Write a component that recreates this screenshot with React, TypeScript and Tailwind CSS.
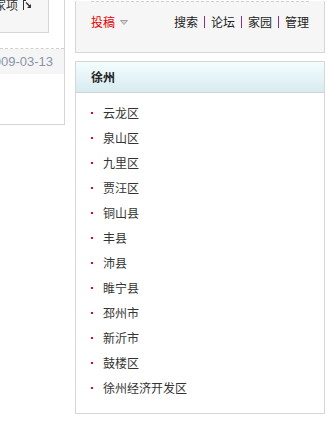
import React from "react";

const districts = [
  "云龙区",
  "泉山区",
  "九里区",
  "贾汪区",
  "铜山县",
  "丰县",
  "沛县",
  "睢宁县",
  "邳州市",
  "新沂市",
  "鼓楼区",
  "徐州经济开发区",
];

const links = ["搜索", "论坛", "家园", "管理"];

const cjk = "font-['SimSun','Noto_Sans_CJK_SC',sans-serif]";

function CornerIcon() {
  return (
    <svg width="9" height="10" viewBox="0 0 9 10" className="shrink-0">
      <path d="M0.5 0 V10 M0.5 0.5 H3" stroke="#333" strokeWidth="1" fill="none" />
      <path d="M3 2.5 L7 6.5" stroke="#333" strokeWidth="1.4" />
      <path d="M8 4 V8 H4 Z" fill="#333" />
    </svg>
  );
}

export default function App() {
  return (
    <div className={`flex w-[333px] h-[423px] overflow-hidden bg-white text-[12px] text-[#333] ${cjk}`}>
      {/* left column, mostly cut off */}
      <div className="w-[65px] shrink-0 h-[125px] border-r border-b border-[#d6d6d6] overflow-hidden">
        <div className="w-[49px] h-[33px] bg-[#f6f6f6] border-r border-b border-[#d6d6d6] overflow-hidden">
          <div className="flex justify-end items-center gap-[5px] pr-[16px] mt-[-5px] h-[20px] leading-[20px] whitespace-nowrap">
            <span>显示选家项</span>
            <CornerIcon />
          </div>
        </div>
        <div className="mt-[15px] border-t border-dashed border-[#d0d0d0]" />
        <div className="h-[25px] bg-[#f5f5f5] flex justify-end items-center pr-[11px] whitespace-nowrap font-['Liberation_Sans',Arial,sans-serif] text-[13px] text-[#8996a8]">
          2009-03-13
        </div>
      </div>

      {/* right column */}
      <div className="ml-[10px] w-[250px] shrink-0">
        <div className="h-[52px] bg-[#f6f6f6] border-x border-b border-[#d6d6d6]">
          <div className="mx-[15px] mt-px border-t border-dashed border-[#cfcfcf]" />
          <div className="flex justify-between items-center px-[15px] mt-[10px] h-[20px]">
            <div className="flex items-center gap-[5px]">
              <span className="text-[#e60000]">投稿</span>
              <svg width="8" height="5" viewBox="0 0 8 5">
                <polygon points="0.5,0.5 7.5,0.5 4,4.5" fill="#d8d8d8" stroke="#a0a0a0" strokeWidth="1" />
              </svg>
            </div>
            <div className="flex items-center">
              {links.map((l, i) => (
                <React.Fragment key={l}>
                  {i > 0 && <span className="inline-block w-px h-[12px] bg-[#86348a] mx-[6px]" />}
                  <span className="text-[#222]">{l}</span>
                </React.Fragment>
              ))}
            </div>
          </div>
        </div>

        <div className="mt-[8px] h-[353px] border border-[#d6d6d6]">
          <div className="h-[31px] bg-gradient-to-b from-[#f4fdfe] to-[#d7ebf0] border-b border-[#d2d2d2] flex items-center pl-[15px]">
            <span className="font-bold text-[12px] text-[#222]">徐州</span>
          </div>
          <ul className="pt-[7px] pl-[15px]">
            {districts.map((d) => (
              <li key={d} className="flex items-center h-[25px] leading-[25px]">
                <span className="w-[2px] h-[2px] bg-[#e8002a] mr-[10px]" />
                <span>{d}</span>
              </li>
            ))}
          </ul>
        </div>
      </div>
    </div>
  );
}
